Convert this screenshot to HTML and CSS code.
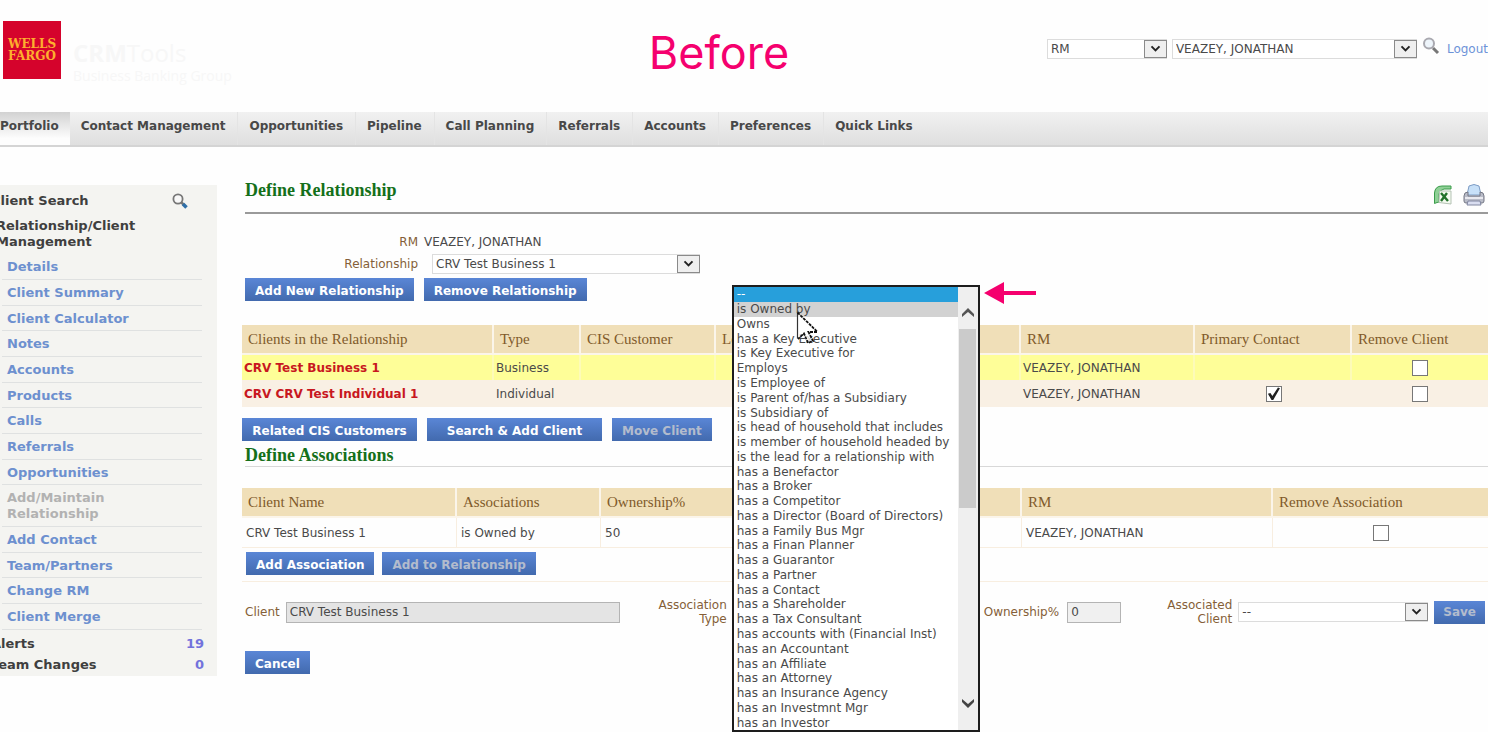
FILE: index.html
```html
<!DOCTYPE html>
<html lang="en">
<head>
<meta charset="utf-8">
<title>CRM Tools - Define Relationship</title>
<link rel="stylesheet" href="styles.css">
</head>
<body>
<svg class="defs" width="0" height="0" aria-hidden="true">
  <symbol id="chevron" viewBox="0 0 23 18">
    <path d="M7 6l4.500 4.500L16 6" fill="none" stroke="#222" stroke-width="2.200"/>
  </symbol>
</svg>

<header class="header">
  <div class="logo"><span>WELLS</span><span>FARGO</span></div>
  <div class="brand">
    <div class="brand-name"><b>CRM</b>Tools</div>
    <div class="brand-group">Business Banking Group</div>
  </div>
  <form class="tools">
    <div class="drop drop-role">
      <select aria-label="Role"><option>RM</option></select>
      <svg class="drop-arrow"><use href="#chevron"/></svg>
    </div>
    <div class="drop drop-user">
      <select aria-label="User"><option>VEAZEY, JONATHAN</option></select>
      <svg class="drop-arrow"><use href="#chevron"/></svg>
    </div>
    <button class="icon-button" type="button" aria-label="Search">
      <svg width="18" height="18" viewBox="0 0 18 18">
        <path d="M11 11l5 5" stroke="#777" stroke-width="3"/>
        <circle cx="7" cy="6.500" r="5" fill="#eef5fb" stroke="#a9a9b0" stroke-width="2"/>
      </svg>
    </button>
    <a class="logout" href="#">Logout</a>
  </form>
  <div class="caption">Before</div>
</header>

<nav class="nav">
  <a class="active" href="#">Portfolio</a>
  <a href="#">Contact Management</a>
  <a href="#">Opportunities</a>
  <a href="#">Pipeline</a>
  <a href="#">Call Planning</a>
  <a href="#">Referrals</a>
  <a href="#">Accounts</a>
  <a href="#">Preferences</a>
  <a href="#">Quick Links</a>
</nav>

<div class="page">
  <aside class="side">
    <div class="side-row side-search">
      <span>Client Search</span>
      <button class="icon-button" type="button" aria-label="Client search">
        <svg width="16" height="16" viewBox="0 0 16 16">
          <path d="M9.500 9.500l2 2" stroke="#777" stroke-width="2.500"/>
          <path d="M11 11l3.500 3.500" stroke="#2f6fa8" stroke-width="3.600"/>
          <circle cx="6" cy="6" r="4.600" fill="#f8f8f8" stroke="#777" stroke-width="1.800"/>
        </svg>
      </button>
    </div>
    <div class="side-title">Relationship/Client Management</div>
    <ul class="side-menu">
      <li><a href="#">Details</a></li>
      <li><a href="#">Client Summary</a></li>
      <li><a href="#">Client Calculator</a></li>
      <li><a href="#">Notes</a></li>
      <li><a href="#">Accounts</a></li>
      <li><a href="#">Products</a></li>
      <li><a href="#">Calls</a></li>
      <li><a href="#">Referrals</a></li>
      <li><a href="#">Opportunities</a></li>
      <li class="current"><a href="#">Add/Maintain Relationship</a></li>
      <li><a href="#">Add Contact</a></li>
      <li><a href="#">Team/Partners</a></li>
      <li><a href="#">Change RM</a></li>
      <li><a href="#">Client Merge</a></li>
    </ul>
    <div class="side-row"><span>Alerts</span><a href="#">19</a></div>
    <div class="side-row"><span>Team Changes</span><a href="#">0</a></div>
  </aside>

  <main class="main">
    <div class="title-row">
      <h1>Define Relationship</h1>
      <div class="exports">
        <button class="icon-button" type="button" aria-label="Export to Excel">
          <svg width="20" height="20" viewBox="0 0 20 20">
            <path d="M4 17.500L1.500 18.500V8Q2 1 9 1h9v3h-7Q6.500 5 6 9v8z" fill="#8fd096" stroke="#3a9c4a"/>
            <path d="M6.500 6H18v13L6 17.500z" fill="#f4faf0" stroke="#b4c2b4"/>
            <path d="M8 8l7 8M14 8l-6 8" stroke="#23722b" stroke-width="2.400"/>
          </svg>
        </button>
        <button class="icon-button" type="button" aria-label="Print">
          <svg width="24" height="24" viewBox="0 0 24 24">
            <path d="M5 12L7 3q5-3 10 0l2 9z" fill="#c7e0f8" stroke="#7d9cc4"/>
            <path d="M3 10l3-1v4h12V9l3 1 1 3v5q0 2-2 2H4q-2 0-2-2v-5z" fill="#b9bcc8" stroke="#747784"/>
            <path d="M3 15h18" stroke="#e9e9ef" stroke-width="2"/>
            <path d="M6 18h12l1 4H5z" fill="#d9ddf0" stroke="#8086a0"/>
          </svg>
        </button>
      </div>
    </div>

    <div class="fields">
      <span class="label">RM</span>
      <span>VEAZEY, JONATHAN</span>
      <label class="label" for="relationship">Relationship</label>
      <div class="drop drop-relationship">
        <select id="relationship"><option>CRV Test Business 1</option></select>
        <svg class="drop-arrow"><use href="#chevron"/></svg>
      </div>
    </div>
    <div class="buttons buttons-top">
      <button class="btn" type="button">Add New Relationship</button>
      <button class="btn" type="button">Remove Relationship</button>
    </div>

    <table class="grid clients">
      <colgroup><col class="c-name"><col class="c-type"><col class="c-cis"><col><col class="c-rm"><col class="c-primary"><col class="c-remove"></colgroup>
      <thead>
        <tr><th>Clients in the Relationship</th><th>Type</th><th>CIS Customer</th><th>Le</th><th>RM</th><th>Primary Contact</th><th>Remove Client</th></tr>
      </thead>
      <tbody>
        <tr class="selected"><td><a href="#">CRV Test Business 1</a></td><td>Business</td><td></td><td></td><td>VEAZEY, JONATHAN</td><td></td><td class="tick"><input type="checkbox" aria-label="Remove CRV Test Business 1"></td></tr>
        <tr class="plain"><td><a href="#">CRV CRV Test Individual 1</a></td><td>Individual</td><td></td><td></td><td>VEAZEY, JONATHAN</td><td class="tick"><input type="checkbox" checked aria-label="Primary contact"></td><td class="tick"><input type="checkbox" aria-label="Remove CRV CRV Test Individual 1"></td></tr>
      </tbody>
    </table>
    <div class="buttons buttons-clients">
      <button class="btn btn-wide" type="button">Related CIS Customers</button>
      <button class="btn btn-wide" type="button">Search &amp; Add Client</button>
      <button class="btn" type="button" disabled>Move Client</button>
    </div>

    <h2>Define Associations</h2>
    <table class="grid associations">
      <colgroup><col class="a-name"><col class="a-type"><col><col class="a-rm"><col class="a-remove"></colgroup>
      <thead>
        <tr><th>Client Name</th><th>Associations</th><th>Ownership%</th><th>RM</th><th>Remove Association</th></tr>
      </thead>
      <tbody>
        <tr><td>CRV Test Business 1</td><td>is Owned by</td><td>50</td><td>VEAZEY, JONATHAN</td><td class="tick"><input type="checkbox" aria-label="Remove association"></td></tr>
      </tbody>
    </table>
    <div class="buttons buttons-assoc">
      <button class="btn" type="button">Add Association</button>
      <button class="btn" type="button" disabled>Add to Relationship</button>
    </div>

    <form class="editor">
      <label class="label" for="client">Client</label>
      <input class="text text-client" id="client" value="CRV Test Business 1" readonly>
      <label class="label label-type" for="type">Association<br>Type</label>
      <div class="combo">
        <div class="drop">
          <select id="type"><option>--</option></select>
          <svg class="drop-arrow"><use href="#chevron"/></svg>
        </div>
        <div class="popup">
          <ul class="options" role="listbox" aria-label="Association Type">
            <li class="picked" role="option" aria-selected="true">--</li>
            <li class="hover" role="option">is Owned by</li>
            <li role="option">Owns</li>
            <li role="option">has a Key Executive</li>
            <li role="option">is Key Executive for</li>
            <li role="option">Employs</li>
            <li role="option">is Employee of</li>
            <li role="option">is Parent of/has a Subsidiary</li>
            <li role="option">is Subsidiary of</li>
            <li role="option">is head of household that includes</li>
            <li role="option">is member of household headed by</li>
            <li role="option">is the lead for a relationship with</li>
            <li role="option">has a Benefactor</li>
            <li role="option">has a Broker</li>
            <li role="option">has a Competitor</li>
            <li role="option">has a Director (Board of Directors)</li>
            <li role="option">has a Family Bus Mgr</li>
            <li role="option">has a Finan Planner</li>
            <li role="option">has a Guarantor</li>
            <li role="option">has a Partner</li>
            <li role="option">has a Contact</li>
            <li role="option">has a Shareholder</li>
            <li role="option">has a Tax Consultant</li>
            <li role="option">has accounts with (Financial Inst)</li>
            <li role="option">has an Accountant</li>
            <li role="option">has an Affiliate</li>
            <li role="option">has an Attorney</li>
            <li role="option">has an Insurance Agency</li>
            <li role="option">has an Investmnt Mgr</li>
            <li role="option">has an Investor</li>
          </ul>
          <div class="scroll">
            <svg class="scroll-up" width="16" height="12" viewBox="0 0 16 12"><path d="M2 10V7l6-6 6 6v3L8 5z" fill="#555"/></svg>
            <div class="thumb"></div>
            <svg width="16" height="12" viewBox="0 0 16 12"><path d="M2 1v3l6 6 6-6V1L8 6z" fill="#444"/></svg>
          </div>
          <svg class="pointer" width="24" height="36" viewBox="0 0 24 36">
            <path d="M1.500 1.500v26l6-5 4 9 5-2-4-8.500h8.500z" fill="#fff" fill-opacity=".75"/>
            <path d="M1.500 1.500v26" stroke="#333" stroke-width="1.200"/>
            <path d="M1.500 1.500L21 20.500" stroke="#111" stroke-width="1.800" stroke-dasharray="3 1"/>
            <path d="M21 21h-8.500l4.500 9-5 2-4-9.500-6 5.500" fill="none" stroke="#111" stroke-width="1.800" stroke-dasharray="3 1"/>
          </svg>
          <svg class="callout" width="52" height="24" viewBox="0 0 52 24"><path d="M0 12L20 1v9h32v4H20v9z" fill="#f5006e"/></svg>
        </div>
      </div>
      <label class="label" for="ownership">Ownership%</label>
      <input class="text text-ownership" id="ownership" value="0">
      <label class="label label-associated" for="associated">Associated<br>Client</label>
      <div class="drop drop-associated">
        <select id="associated"><option>--</option></select>
        <svg class="drop-arrow"><use href="#chevron"/></svg>
      </div>
      <button class="btn btn-save" type="button" disabled>Save</button>
    </form>
    <div class="buttons buttons-cancel">
      <button class="btn" type="button">Cancel</button>
    </div>
  </main>
</div>
</body>
</html>
```
FILE: styles.css
```css
* { box-sizing: border-box; }

body {
  min-height: 100vh;
  margin: 0;
  overflow: hidden;
  background: #fefefe;
  color: #4a4a4a;
  font: 12px/16px "DejaVu Sans", Verdana, sans-serif;
}

a { text-decoration: none; }
ul { margin: 0; padding: 0; list-style: none; }
button, input, select { margin: 0; font: inherit; color: inherit; }
.defs { position: absolute; }

.icon-button { display: flex; padding: 0; border: 0; background: none; }

/* Header */
.header {
  position: relative;
  display: flex;
  align-items: flex-start;
  height: 112px;
  padding: 21px 0 0 3px;
}
.logo {
  display: flex;
  flex-direction: column;
  justify-content: center;
  align-items: center;
  width: 58px;
  height: 58px;
  background: #d5032c;
  color: #fdaf2e;
  font: bold 12px/12px "DejaVu Serif", serif;
}
.brand { padding: 18px 0 0 12px; color: #f7f7f7; font-family: "Open Sans", sans-serif; }
.brand-name { font-size: 24px; line-height: 28px; }
.brand-group { font-size: 14px; line-height: 18px; }
.tools { display: flex; align-items: center; margin-left: auto; padding-top: 18px; }
.tools .icon-button { margin: -6px 7px 0 5px; }
.logout { color: #6d93d8; }
.caption {
  position: absolute;
  top: 24px;
  left: 0;
  right: 50px;
  color: #f5006e;
  font: 45px/58px Inter, sans-serif;
  text-align: center;
  pointer-events: none;
}

/* Drop-downs */
.drop { display: grid; }
.drop select, .drop-arrow { grid-area: 1 / 1; }
.drop select {
  appearance: none;
  width: 100%;
  height: 20px;
  padding: 0 26px 0 3px;
  border: 1px solid #dcdcdc;
  border-radius: 0;
  background: #fff;
}
.drop-arrow {
  justify-self: end;
  align-self: center;
  width: 23px;
  height: 18px;
  border: 1px solid #8a8a8a;
  background: #efefef;
  pointer-events: none;
}
.drop-role { width: 120px; margin-right: 5px; }
.drop-user { width: 245px; }
.drop-relationship { width: 268px; }

/* Main navigation */
.nav {
  display: flex;
  height: 35px;
  border-bottom: 2px solid #d4d4d4;
  background: linear-gradient(#f1f1f1, #dfdfdf);
}
.nav a {
  padding: 0 12px 0 11px;
  border-right: 1px solid #e4e4e4;
  color: #484848;
  font-weight: bold;
  line-height: 29px;
}
.nav a:last-child { border-right: 0; }
.nav .active { padding: 0 11px 0 0; border: 0; background: linear-gradient(#d2d2d2, #fdfdfd 80%); }

/* Page columns */
.page { display: flex; align-items: flex-start; padding-top: 30px; }

.side {
  flex: none;
  width: 226px;
  margin: 8px 25px 0 -9px;
  padding: 5px 13px 1px 0;
  background: #f4f4f1;
  color: #3f3f3f;
  font-size: 13px;
  font-weight: bold;
}
.side-row { display: flex; justify-content: space-between; align-items: center; height: 21px; }
.side-row a { color: #7272dc; }
.side-search { padding-right: 16px; }
.side-title { padding: 7px 0 4px 5px; }
.side-menu { margin: 0 2px 3px 11px; }
.side-menu li { padding: 5px 50px 4px 5px; border-bottom: 1px solid #dfe1e1; }
.side-menu li:nth-child(3n) { padding-bottom: 3px; }
.side-menu a { color: #6d90cf; }
.side-menu .current a { color: #b2b2b2; }

.main { flex: 1; min-width: 0; }

h1, h2 {
  margin: 0;
  color: #14701a;
  font: bold 18px/22px "Liberation Serif", serif;
}
.title-row {
  display: flex;
  justify-content: space-between;
  height: 37px;
  margin-left: 3px;
  border-bottom: 2px solid #9a9a9a;
}
.title-row h1 { padding-top: 2px; }
.exports { display: flex; align-items: center; gap: 9px; padding-right: 2px; }
h2 { margin-left: 3px; padding-top: 3px; border-bottom: 1px solid #d8d8d8; }

.label { color: #855f38; }
.fields {
  display: grid;
  grid-template-columns: 176px 1fr;
  align-items: center;
  column-gap: 6px;
  row-gap: 4px;
  padding-top: 20px;
}
.fields .label { text-align: right; }
.drop-relationship { margin-left: 8px; }

/* Buttons */
.buttons { display: flex; gap: 10px; }
.buttons-top { padding: 4px 3px 24px; }
.btn {
  height: 23px;
  padding: 3px 10px 0;
  border: 0;
  background: linear-gradient(#5a86d6, #426aae);
  color: #fff;
  font-weight: bold;
  white-space: nowrap;
}
.btn:disabled { color: #b3bccd; }
.btn-wide { width: 175px; }
.buttons-clients { padding-top: 11px; }
.buttons-assoc { gap: 8px; padding: 4px 4px 6px; border-bottom: 1px solid #f8eee0; }
.buttons-cancel { padding: 25px 3px; }

/* Tables */
.grid { width: 100%; table-layout: fixed; border-collapse: separate; border-spacing: 0; }
.grid th {
  height: 30px;
  padding: 0 6px;
  border-right: 2px solid #fbf5ea;
  border-bottom: 2px solid #fbf5ea;
  background: #f0dfb8;
  color: #805a2a;
  font: 15px/20px "Liberation Serif", serif;
  text-align: left;
  white-space: nowrap;
}
.grid td { padding: 0 2px; }
.grid .tick { text-align: center; }
.clients td { height: 25px; }
.clients a { color: #c8171f; font-weight: bold; }
.clients .selected td { border-right: 2px solid #fdfbb8; background: #fefe98; }
.clients .plain td { height: 27px; background: #f9f0e4; }
.c-name { width: 252px; }
.c-type { width: 87px; }
.c-cis { width: 135px; }
.c-rm { width: 174px; }
.c-primary { width: 157px; }
.c-remove { width: 136px; }
.associations { margin-top: 21px; }
.associations td { height: 30px; padding: 0 4px; border-right: 1px solid #f8eee0; border-bottom: 1px solid #f8eee0; }
.a-name { width: 215px; }
.a-type { width: 144px; }
.a-rm { width: 251px; }
.a-remove { width: 215px; }
.grid th:last-child, .grid td:last-child { border-right: 0; }

input[type="checkbox"] {
  appearance: none;
  display: inline-block;
  width: 16px;
  height: 16px;
  border: 1px solid #777;
  background: #fff;
  vertical-align: middle;
}
input[type="checkbox"]:checked::before {
  content: "";
  display: block;
  width: 14px;
  height: 14px;
  background: #222;
  clip-path: polygon(10% 50%, 28% 45%, 42% 66%, 82% 6%, 96% 10%, 48% 94%, 36% 94%);
}

/* Association editor */
.editor { display: flex; align-items: center; padding: 16px 3px 0; }
.editor .label { text-align: right; line-height: 14px; }
.text {
  height: 21px;
  padding: 0 3px;
  border: 1px solid #b4b4b4;
  border-radius: 0;
  background: #e4e4e4;
}
.text-client { width: 334px; margin-left: 6px; }
.text-ownership { width: 54px; margin-left: 8px; background: #f0f0f0; }
.label-type { width: 107px; }
.label-associated { flex: 1; }
.drop-associated { width: 190px; margin-left: 6px; }
.btn-save { margin-left: 6px; padding: 0 9px; }

.combo { position: relative; width: 247px; margin: 0 4px 0 6px; }
.popup {
  position: absolute;
  top: -317px;
  left: -1px;
  z-index: 1;
  display: flex;
  width: 248px;
  height: 447px;
  border: 2px solid #1d1d1d;
  background: #fff;
}
.options {
  flex: 1;
  display: grid;
  grid-auto-rows: 1fr;
}
.options li { display: flex; align-items: center; padding-left: 3px; line-height: 14px; white-space: nowrap; }
.options .picked { background: #279fdb; color: #fff; }
.options .hover { background: #d2d2d2; }
.scroll {
  display: flex;
  flex-direction: column;
  align-items: center;
  justify-content: space-between;
  width: 20px;
  padding: 20px 0 20px;
  background: #efefef;
}
.scroll-up { flex: none; }
.thumb { width: 17px; height: 179px; margin: 10px 0 auto; background: #cbcbcb; }
.pointer { position: absolute; top: 24px; left: 62px; }
.callout { position: absolute; top: -6px; left: 250px; }
```
